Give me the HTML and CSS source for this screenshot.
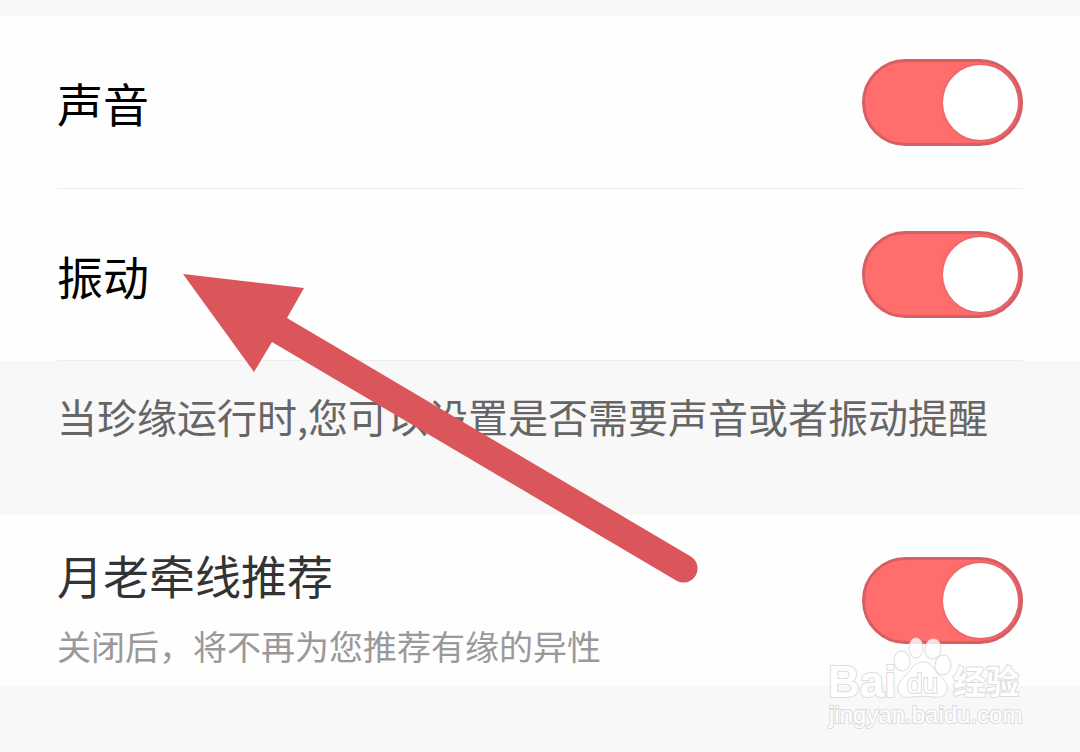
FILE: index.html
```html
<!DOCTYPE html>
<html lang="zh-CN">

<head>
  <meta charset="UTF-8">
  <meta name="viewport" content="width=device-width, initial-scale=1.0">
  <title>消息提醒设置</title>
  <link rel="stylesheet" href="styles.css">
</head>

<body>
  <main class="settings">
    <!-- 声音与振动 -->
    <section class="group">
      <div class="row">
        <label class="row-title" for="sound">声音</label>
        <input class="switch" type="checkbox" id="sound" checked>
      </div>
      <div class="row">
        <label class="row-title" for="vibrate">振动</label>
        <input class="switch" type="checkbox" id="vibrate" checked>
      </div>
    </section>
    <p class="hint">当珍缘运行时,您可以设置是否需要声音或者振动提醒</p>

    <!-- 推荐 -->
    <section class="group">
      <div class="row row-tall">
        <div class="row-text">
          <label class="row-title soft" for="recommend">月老牵线推荐</label>
          <p class="row-desc">关闭后，将不再为您推荐有缘的异性</p>
        </div>
        <input class="switch" type="checkbox" id="recommend" checked>
      </div>
    </section>

    <!-- 箭头标注 -->
    <svg class="arrow" width="520" height="318" viewBox="0 0 520 318" aria-hidden="true">
      <path d="M3 4L124 18L107 48L510 286A14 14 0 0 1 497 311L92 72L74 102Z" fill="#db565b" />
    </svg>

    <!-- 水印 -->
    <svg class="watermark" width="204" height="100" viewBox="0 0 204 100">
      <g class="mark">
        <ellipse cx="80" cy="26" rx="8" ry="10" transform="rotate(-8 80 26)" />
        <ellipse cx="94" cy="13" rx="7" ry="10" />
        <ellipse cx="111" cy="14" rx="8" ry="10" transform="rotate(8 111 14)" />
        <ellipse cx="121" cy="30" rx="8" ry="10" transform="rotate(8 121 30)" />
        <path d="M101 27C91 27 89 36 83 41C78 46 75 49 76 55C78 62 84 63 90 62C97 61 105 61 112 62C119 63 125 61 125 54C126 48 122 45 117 40C112 35 110 27 101 27Z" />
      </g>
      <g class="mark mark-text">
        <text class="brand" x="6" y="62">Bai</text>
        <text class="du" x="85" y="58">du</text>
        <text class="brand-cn" x="131" y="59">经验</text>
        <text class="site" x="7" y="88">jingyan.baidu.com</text>
      </g>
    </svg>
  </main>
</body>

</html>
```
FILE: styles.css
```css
* {
  margin: 0;
  padding: 0;
  box-sizing: border-box;
}

body {
  font-family: "Noto Sans CJK SC", sans-serif;
  background: #f8f8f8;
  min-height: 100vh;
}

.settings {
  position: relative;
  padding-top: 16px;
}

.group {
  background: #fefefe;
  padding: 0 57px;
}

.row {
  display: flex;
  align-items: center;
  justify-content: space-between;
  height: 173px;
  border-bottom: 1px solid #ededed;
}

.row + .row {
  height: 172px;
}

.row-tall {
  height: 171px;
  border-bottom: none;
}

.row-title {
  display: block;
  font-size: 46px;
  line-height: 60px;
  color: #000;
}

.row-title.soft {
  color: #333;
}

.row-text {
  padding-top: 12px;
}

.row-desc {
  margin-top: 18px;
  font-size: 34px;
  line-height: 48px;
  color: #999;
}

.hint {
  padding: 25px 57px 69px;
  font-size: 40px;
  line-height: 60px;
  color: #666;
}

/* 开关 */
.switch {
  appearance: none;
  display: flex;
  align-items: center;
  justify-content: flex-end;
  flex: none;
  width: 161px;
  height: 87px;
  padding-right: 2px;
  border: 3px solid #d65f64;
  border-radius: 44px;
  background: #ff6d6d;
  cursor: pointer;
}

.switch::before {
  content: "";
  width: 75px;
  height: 75px;
  border-radius: 50%;
  background: #fff;
  box-shadow: 1px 0 4px #c9575e;
}

.switch:not(:checked) {
  justify-content: flex-start;
  padding-left: 2px;
  border-color: #ccc;
  background: #ddd;
}

/* 覆盖层 */
.arrow {
  position: absolute;
  left: 180px;
  top: 270px;
  pointer-events: none;
}

.watermark {
  position: absolute;
  right: 54px;
  top: 635px;
  pointer-events: none;
}

.mark {
  fill: #fff;
  fill-opacity: 0.8;
  stroke: #dcdcdc;
  stroke-width: 1px;
}

.mark-text {
  fill-opacity: 1;
  stroke-width: 2px;
  paint-order: stroke;
}

.brand {
  font: bold 44px "Liberation Sans", sans-serif;
}

.du {
  font: 28px "Liberation Sans", sans-serif;
}

.brand-cn {
  font: bold 33px "Noto Sans CJK SC", sans-serif;
}

.site {
  font: 24px "Liberation Sans", sans-serif;
}
```
